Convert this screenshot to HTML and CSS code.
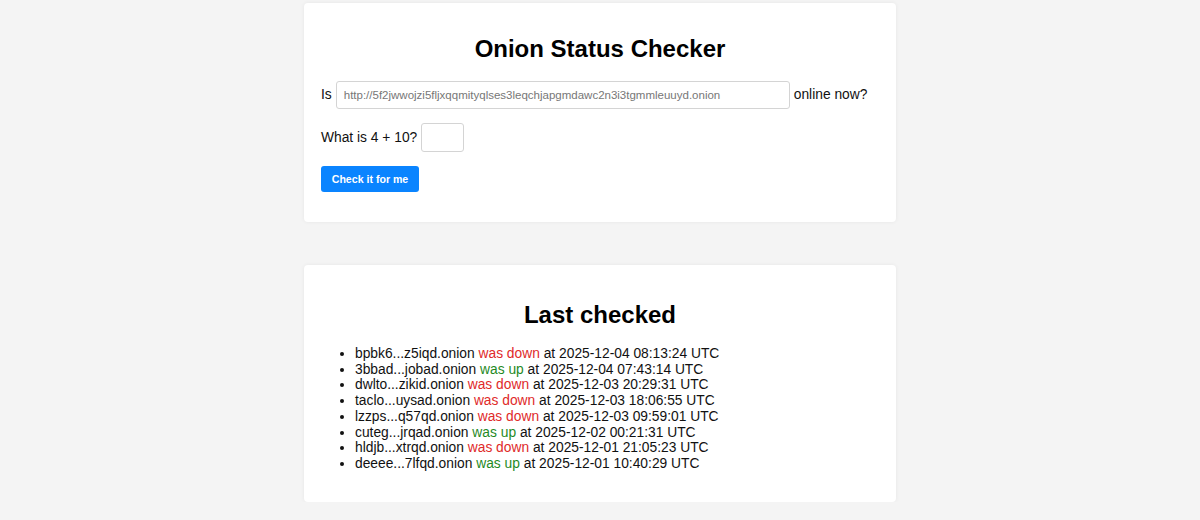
FILE: index.html
```html
<!DOCTYPE html>
<html lang="en">
<head>
<meta charset="utf-8">
<title>Onion Status Checker</title>
<link rel="stylesheet" href="styles.css">
</head>
<body>
<main class="page">
  <section class="card card-check">
    <h1 class="title">Onion Status Checker</h1>
    <form class="check-form">
      <div class="row">
        <label class="label" for="url">Is</label>
        <input class="field field-url" id="url" type="text" placeholder="http://5f2jwwojzi5fljxqqmityqlses3leqchjapgmdawc2n3i3tgmmleuuyd.onion">
        <span class="label">online now?</span>
      </div>
      <div class="row">
        <label class="label" for="captcha">What is 4 + 10?</label>
        <input class="field field-captcha" id="captcha" type="text">
      </div>
      <div class="row">
        <button class="btn" type="button">Check it for me</button>
      </div>
    </form>
  </section>

  <section class="card card-history">
    <h1 class="title">Last checked</h1>
    <ul class="history">
      <li>bpbk6...z5iqd.onion <span class="down">was down</span> at 2025-12-04 08:13:24 UTC</li>
      <li>3bbad...jobad.onion <span class="up">was up</span> at 2025-12-04 07:43:14 UTC</li>
      <li>dwlto...zikid.onion <span class="down">was down</span> at 2025-12-03 20:29:31 UTC</li>
      <li>taclo...uysad.onion <span class="down">was down</span> at 2025-12-03 18:06:55 UTC</li>
      <li>lzzps...q57qd.onion <span class="down">was down</span> at 2025-12-03 09:59:01 UTC</li>
      <li>cuteg...jrqad.onion <span class="up">was up</span> at 2025-12-02 00:21:31 UTC</li>
      <li>hldjb...xtrqd.onion <span class="down">was down</span> at 2025-12-01 21:05:23 UTC</li>
      <li>deeee...7lfqd.onion <span class="up">was up</span> at 2025-12-01 10:40:29 UTC</li>
    </ul>
  </section>
</main>
</body>
</html>
```

FILE: styles.css
```css
html, body {
  margin: 0;
  padding: 0;
}

body {
  background: #f4f4f4;
  font-family: "Liberation Sans", Arial, sans-serif;
  font-size: 13.8px;
  color: #111;
}

.page {
  display: flex;
  flex-direction: column;
  align-items: center;
  gap: 43px;
  padding-top: 3px;
}

.card {
  box-sizing: border-box;
  width: 592px;
  background: #fff;
  border-radius: 4px;
  box-shadow: 0 0 4px rgba(0, 0, 0, 0.06);
  padding: 17px;
}

.title {
  margin: 0;
  font-size: 24px;
  line-height: 28px;
  font-weight: bold;
  text-align: center;
  color: #000;
}

.card-check {
  height: 219px;
}

.card-check .title {
  margin-top: 15px;
  margin-bottom: 18px;
}

.check-form {
  display: flex;
  flex-direction: column;
  gap: 14px;
}

.row {
  display: flex;
  align-items: center;
  gap: 4px;
}

.label {
  font-size: 13.8px;
  line-height: 16px;
}

.field {
  box-sizing: border-box;
  border: 1px solid #d4d4d4;
  border-radius: 3px;
  background: #fff;
  font-family: "Liberation Sans", Arial, sans-serif;
  font-size: 11.5px;
  color: #333;
  padding: 0 7px;
  outline: none;
}

.field::placeholder {
  color: #777;
}

.field-url {
  width: 454px;
  height: 28px;
}

.field-captcha {
  width: 43px;
  height: 29px;
}

.btn {
  box-sizing: border-box;
  height: 26px;
  width: 98px;
  border: none;
  border-radius: 3px;
  background: #0a84ff;
  color: #fff;
  font-family: "Liberation Sans", Arial, sans-serif;
  font-size: 10.6px;
  font-weight: bold;
  padding: 0;
  cursor: pointer;
}

.card-history {
  height: 237px;
}

.card-history .title {
  margin-top: 19px;
  margin-bottom: 17px;
}

.history {
  margin: 0;
  padding-left: 34px;
  font-size: 13.8px;
  line-height: 15.7px;
  color: #111;
}

.down {
  color: #e02a2a;
}

.up {
  color: #1f8a1f;
}
```
